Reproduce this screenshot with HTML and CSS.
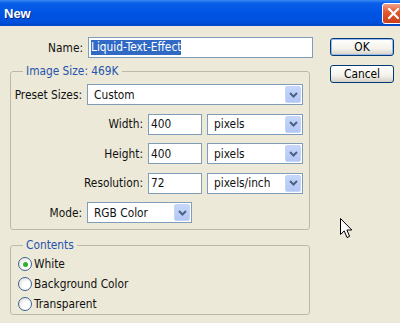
FILE: index.html
```html
<!DOCTYPE html>
<html lang="en">
<head>
    <meta charset="UTF-8">
    <title>New</title>
    <link rel="stylesheet" href="styles.css">
</head>
<body>
    <div class="dialog">
        <div class="titlebar">
            <span class="title">New</span>
            <span class="close-btn">
                <svg width="13" height="13" viewBox="0 0 13 13"><path d="M2 2 L11 11 M11 2 L2 11" stroke="#fff" stroke-width="2.2" stroke-linecap="round"/></svg>
            </span>
        </div>

        <div class="content">
            <div class="left-col">
                <div class="row name-row">
                    <label class="row-label">Name:</label>
                    <div class="textbox name-box"><span class="selected">Liquid-Text-Effect</span></div>
                </div>

                <fieldset class="group">
                    <legend>Image Size: 469K</legend>
                    <div class="row">
                        <label class="row-label">Preset Sizes:</label>
                        <div class="select preset-select">
                            <span>Custom</span>
                            <span class="arrow"><svg width="9" height="6" viewBox="0 0 9 6"><path d="M1 1 L4.5 4.5 L8 1" fill="none" stroke="#4d6185" stroke-width="2"/></svg></span>
                        </div>
                    </div>
                    <div class="row unit-row">
                        <label class="row-label">Width:</label>
                        <div class="textbox num-box">400</div>
                        <div class="select unit-select">
                            <span>pixels</span>
                            <span class="arrow"><svg width="9" height="6" viewBox="0 0 9 6"><path d="M1 1 L4.5 4.5 L8 1" fill="none" stroke="#4d6185" stroke-width="2"/></svg></span>
                        </div>
                    </div>
                    <div class="row unit-row">
                        <label class="row-label">Height:</label>
                        <div class="textbox num-box">400</div>
                        <div class="select unit-select">
                            <span>pixels</span>
                            <span class="arrow"><svg width="9" height="6" viewBox="0 0 9 6"><path d="M1 1 L4.5 4.5 L8 1" fill="none" stroke="#4d6185" stroke-width="2"/></svg></span>
                        </div>
                    </div>
                    <div class="row unit-row">
                        <label class="row-label">Resolution:</label>
                        <div class="textbox num-box">72</div>
                        <div class="select unit-select">
                            <span>pixels/inch</span>
                            <span class="arrow"><svg width="9" height="6" viewBox="0 0 9 6"><path d="M1 1 L4.5 4.5 L8 1" fill="none" stroke="#4d6185" stroke-width="2"/></svg></span>
                        </div>
                    </div>
                    <div class="row">
                        <label class="row-label">Mode:</label>
                        <div class="select mode-select">
                            <span>RGB Color</span>
                            <span class="arrow"><svg width="9" height="6" viewBox="0 0 9 6"><path d="M1 1 L4.5 4.5 L8 1" fill="none" stroke="#4d6185" stroke-width="2"/></svg></span>
                        </div>
                    </div>
                </fieldset>

                <fieldset class="group contents">
                    <legend>Contents</legend>
                    <div class="radio-row"><span class="radio checked"></span>White</div>
                    <div class="radio-row"><span class="radio"></span>Background Color</div>
                    <div class="radio-row"><span class="radio"></span>Transparent</div>
                </fieldset>
            </div>

            <div class="right-col">
                <button class="btn default">OK</button>
                <button class="btn">Cancel</button>
            </div>
        </div>

        <!-- курсор мыши поверх диалога -->
        <svg class="cursor" width="13" height="21" viewBox="0 0 13 21">
            <path d="M0.5 0.5 L0.5 16.5 L4.2 12.9 L7 19.5 L9.6 18.4 L6.9 12 L11.8 12 Z" fill="#fff" stroke="#000" stroke-width="1"/>
        </svg>
    </div>
</body>
</html>
```

FILE: styles.css
```css
/* Базовые настройки */
body, html {
    margin: 0;
    padding: 0;
    width: 100%;
    height: 100%;
    overflow: hidden;
    background: #ece9d8;
    font-family: "DejaVu Sans Condensed", "DejaVu Sans", sans-serif;
    font-size: 11.8px;
    color: #111;
}

.dialog {
    position: relative;
    height: 323px;
    background: #ece9d8;
}

/* Заголовок окна */
.titlebar {
    height: 26px;
    display: flex;
    align-items: center;
    justify-content: space-between;
    background: linear-gradient(to bottom, #3b8cf5 0, #0a5fe8 3px, #0055e5 12px, #0050dc 22px, #0046c8 26px);
}

.title {
    padding-left: 4px;
    color: #fff;
    font-family: "Liberation Sans", Arial, sans-serif;
    font-weight: bold;
    font-size: 13px;
    text-shadow: 1px 1px 0 #0a2a8a;
}

.close-btn {
    width: 21px;
    height: 19px;
    margin-right: -5px;
    margin-top: 1px;
    border: 1px solid #fff;
    border-radius: 3px;
    background: linear-gradient(to bottom, #f0a08a, #e2552c 45%, #c8401c);
    display: flex;
    align-items: center;
    justify-content: center;
}

/* Основная часть */
.content {
    display: flex;
    padding-left: 10px;
}

.left-col {
    width: 304px;
    padding-top: 11px;
}

.right-col {
    display: flex;
    flex-direction: column;
    gap: 9px;
    margin-left: 16px;
    padding-top: 12px;
}

.row {
    display: flex;
    align-items: center;
    height: 21px;
}

.row-label {
    padding-right: 5px;
    text-align: right;
    box-sizing: border-box;
    width: 76px;
}

.name-row .row-label {
    width: 78px;
}

.unit-row .row-label {
    width: 137px;
}

.textbox {
    height: 21px;
    box-sizing: border-box;
    border: 1px solid #7f9db9;
    background: #fff;
    display: flex;
    align-items: center;
    padding-left: 2px;
}

.name-box {
    width: 225px;
}

.selected {
    background: #316ac5;
    color: #fff;
    line-height: 15px;
}

.num-box {
    width: 54px;
    margin-right: 5px;
}

.select {
    height: 21px;
    box-sizing: border-box;
    border: 1px solid #7f9db9;
    background: #fff;
    display: flex;
    align-items: center;
    justify-content: space-between;
    padding: 1px;
    padding-left: 6px;
}

.arrow {
    width: 16px;
    height: 17px;
    box-sizing: border-box;
    border: 1px solid #c4d5f9;
    border-radius: 2px;
    background: linear-gradient(to bottom, #c6d6fb, #b3c7f5);
    display: flex;
    align-items: center;
    justify-content: center;
}

.preset-select {
    width: 216px;
}

.unit-select {
    width: 96px;
}

.mode-select {
    width: 105px;
}

/* Группы */
.group {
    width: 300px;
    box-sizing: border-box;
    margin: 6px 0 0 0;
    padding: 6px 0 6px 0;
    border: 1px solid #bdb9a9;
    border-radius: 3px;
    display: flex;
    flex-direction: column;
    gap: 8.5px;
}

.group legend {
    margin-left: 12px;
    padding: 0 3px;
    line-height: 14px;
    color: #2553ad;
}

.contents {
    margin-top: 8px;
    padding: 2px 0 0 0;
    gap: 0;
}

.radio-row {
    display: flex;
    align-items: center;
    height: 20px;
    padding-left: 7px;
}

.radio {
    width: 14px;
    height: 14px;
    box-sizing: border-box;
    margin-right: 2px;
    border: 1px solid #3b6394;
    border-radius: 50%;
    background: radial-gradient(circle at 65% 65%, #fff 30%, #dcdad0);
    display: flex;
    align-items: center;
    justify-content: center;
}

.radio.checked::after {
    content: "";
    width: 5px;
    height: 5px;
    border-radius: 50%;
    background: #2fb12f;
}

/* Кнопки */
.btn {
    width: 64px;
    height: 18px;
    padding: 0;
    font-family: inherit;
    font-size: 11.8px;
    color: #000;
    border: 1px solid #003c74;
    border-radius: 3px;
    background: linear-gradient(to bottom, #fff, #f3f2ea 60%, #d6d0c5);
}

.btn.default {
    box-shadow: inset 0 0 0 1px #9cb8f0;
}

.cursor {
    position: absolute;
    left: 340px;
    top: 218px;
}
```
